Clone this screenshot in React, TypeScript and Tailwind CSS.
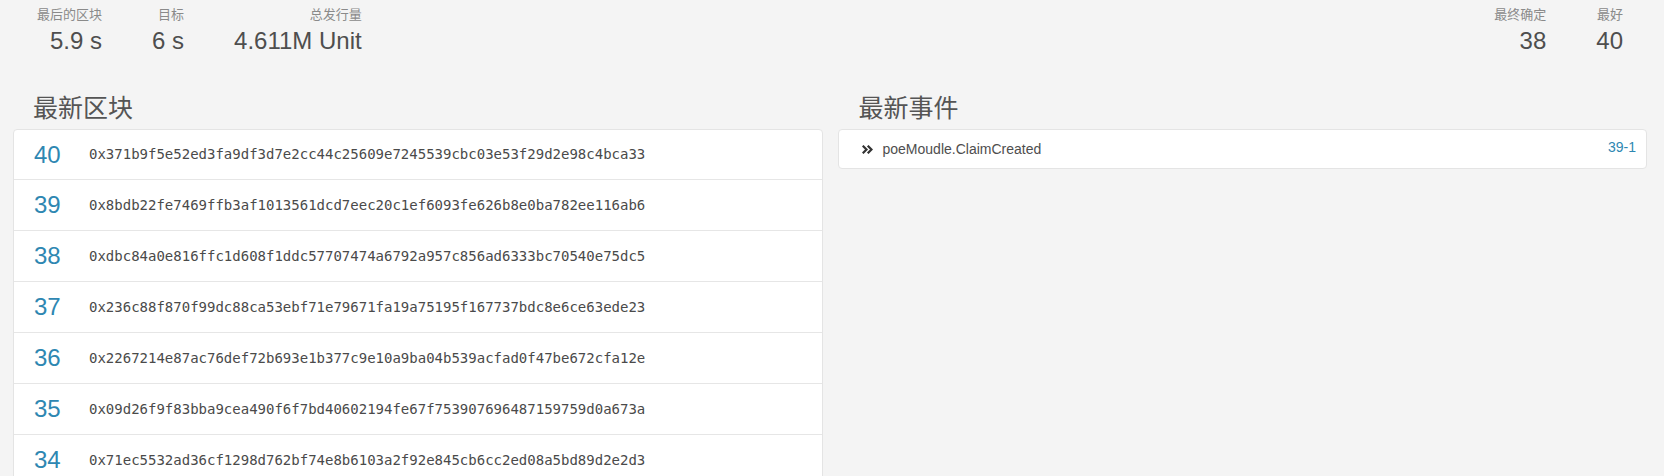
import React from "react";

const FONT = { fontFamily: '"Liberation Sans", "Noto Sans CJK SC", sans-serif' };

interface Stat {
  label: string;
  value: string;
}

const leftStats: Stat[] = [
  { label: "最后的区块", value: "5.9 s" },
  { label: "目标", value: "6 s" },
  { label: "总发行量", value: "4.611M Unit" },
];

const rightStats: Stat[] = [
  { label: "最终确定", value: "38" },
  { label: "最好", value: "40" },
];

const blocks: [number, string][] = [
  [40, "0x371b9f5e52ed3fa9df3d7e2cc44c25609e7245539cbc03e53f29d2e98c4bca33"],
  [39, "0x8bdb22fe7469ffb3af1013561dcd7eec20c1ef6093fe626b8e0ba782ee116ab6"],
  [38, "0xdbc84a0e816ffc1d608f1ddc57707474a6792a957c856ad6333bc70540e75dc5"],
  [37, "0x236c88f870f99dc88ca53ebf71e79671fa19a75195f167737bdc8e6ce63ede23"],
  [36, "0x2267214e87ac76def72b693e1b377c9e10a9ba04b539acfad0f47be672cfa12e"],
  [35, "0x09d26f9f83bba9cea490f6f7bd40602194fe67f753907696487159759d0a673a"],
  [34, "0x71ec5532ad36cf1298d762bf74e8b6103a2f92e845cb6cc2ed08a5bd89d2e2d3"],
];

function StatBox({ label, value }: Stat) {
  return (
    <div className="flex flex-col items-end px-[25px]">
      <div className="text-[13px] leading-[16px] text-[#8a8a8a]">{label}</div>
      <div className="mt-[3px] text-[24px] leading-[29px] text-[#4e4e4e]">{value}</div>
    </div>
  );
}

function ChevronsIcon() {
  return (
    <svg width="11" height="9" viewBox="0 0 11 9" fill="none" className="shrink-0">
      <path d="M1.5 1.5 L4.5 4.5 L1.5 7.5" stroke="#333" strokeWidth="2.2" strokeLinecap="square" />
      <path d="M6.5 1.5 L9.5 4.5 L6.5 7.5" stroke="#333" strokeWidth="2.2" strokeLinecap="square" />
    </svg>
  );
}

export default function App() {
  return (
    <div className="h-[476px] overflow-hidden bg-[#f4f4f4]" style={FONT}>
      <div className="flex justify-between px-[12px] pt-[7px]">
        <div className="flex">
          {leftStats.map((s) => (
            <StatBox key={s.label} {...s} />
          ))}
        </div>
        <div className="flex pr-[4px]">
          {rightStats.map((s) => (
            <StatBox key={s.label} {...s} />
          ))}
        </div>
      </div>

      <div className="mt-[37px] grid grid-cols-2 gap-[15px] pl-[13px] pr-[17px]">
        <section>
          <h2 className="pl-[20px] text-[25px] leading-[32px] text-[#555]">最新区块</h2>
          <div className="mt-[5px] rounded-[4px] border border-[#e4e4e4] bg-white">
            {blocks.map(([n, hash], i) => (
              <div
                key={n}
                className={`flex items-center pl-[20px] ${i > 0 ? "h-[51px] border-t border-[#e6e6e6]" : "h-[49px]"}`}
              >
                <span className="w-[55px] text-[24px] text-[#2e87b2]">{n}</span>
                <span
                  className="text-[14px] text-[#4a4a4a]"
                  style={{ fontFamily: '"DejaVu Sans Mono", monospace' }}
                >
                  {hash}
                </span>
              </div>
            ))}
          </div>
        </section>

        <section>
          <h2 className="pl-[21px] text-[25px] leading-[32px] text-[#555]">最新事件</h2>
          <div className="relative mt-[5px] flex h-[40px] items-center gap-[10px] rounded-[4px] border border-[#e4e4e4] bg-white pl-[23px]">
            <ChevronsIcon />
            <span className="text-[14px] text-[#4e4e4e]">poeMoudle.ClaimCreated</span>
            <span className="absolute right-[10px] top-[7px] text-[14px] text-[#2e87b2]">39-1</span>
          </div>
        </section>
      </div>
    </div>
  );
}
